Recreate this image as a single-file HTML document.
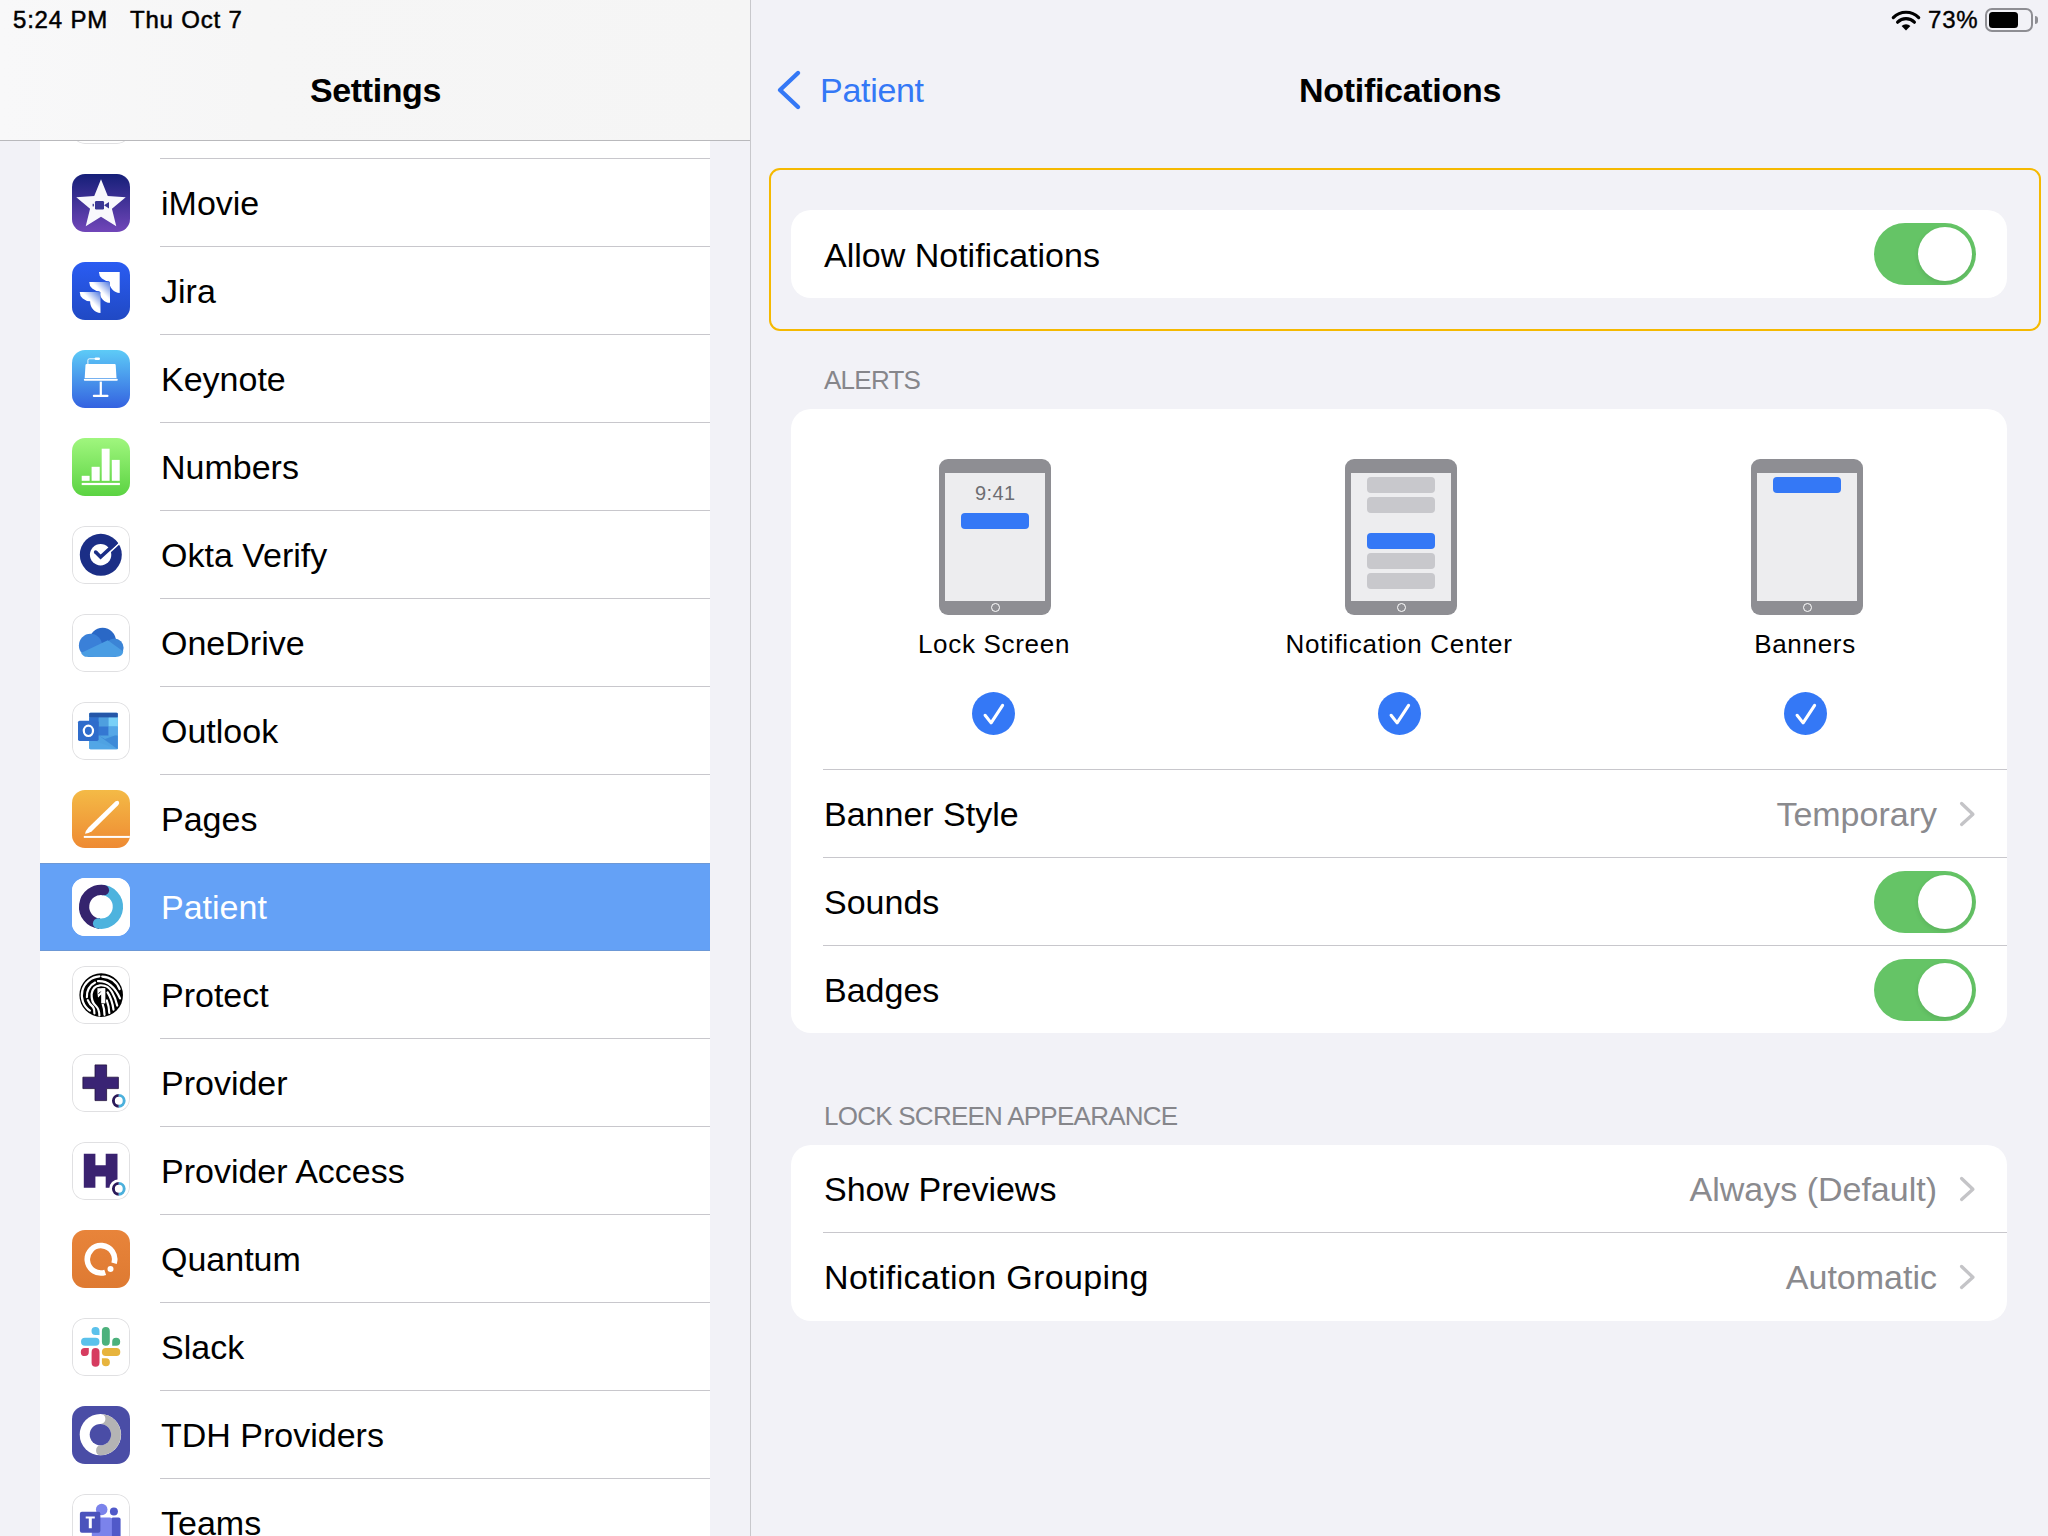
<!DOCTYPE html>
<html><head><meta charset="utf-8">
<style>
*{margin:0;padding:0;box-sizing:border-box}
html,body{width:2048px;height:1536px;overflow:hidden;background:#F2F2F7;font-family:"Liberation Sans",sans-serif;color:#000}
.a{position:absolute}
.t{position:absolute;white-space:nowrap;line-height:1}
.f34{font-size:34px}
.sep{position:absolute;height:1px;background:#C8C7CC}
.icon{position:absolute;left:72px;width:58px;height:58px;border-radius:13px;overflow:hidden}
.icon svg{display:block;width:58px;height:58px}
.wb:after{content:"";position:absolute;left:0;top:0;right:0;bottom:0;border-radius:13px;box-shadow:inset 0 0 0 1px #E0E0E2}
.wb{background:#fff}
.tog{position:absolute;width:102px;height:62px;border-radius:31px;background:#65C466}
.tog:after{content:"";position:absolute;left:44px;top:4px;width:54px;height:54px;border-radius:27px;background:#fff;box-shadow:0 2px 5px rgba(0,0,0,.10)}
.gray{color:#8A8A8E}
.hdr{font-size:26px;letter-spacing:-0.75px;color:#86868B}
.ipad{position:absolute;top:459px;width:112px;height:156px;border-radius:9px;background:#8E8E93}
.ipad .scr{position:absolute;left:6px;top:14px;width:100px;height:128px;background:#EDEDEF}
.ipad .hb{position:absolute;left:51.5px;top:143.5px;width:9px;height:9px;border-radius:50%;border:1.5px solid #fff}
.bar{position:absolute;width:68px;height:16px;border-radius:4px;background:#C8C8CC}
.bar.b{background:#3478F6}
.lbl{position:absolute;width:300px;text-align:center;font-size:26px;letter-spacing:0.7px;line-height:1;top:631px;white-space:nowrap}
.chk{position:absolute;top:691.5px;width:43px;height:43px}
.val{position:absolute;right:111px;font-size:34px;line-height:1;color:#8A8A8E;white-space:nowrap}
.chev{position:absolute;left:1958px;width:18px;height:26px}
</style></head><body>

<!-- LEFT SIDEBAR -->
<div class="a" style="left:0;top:0;width:750px;height:1536px;background:#F2F2F7"></div>
<div class="a" style="left:40px;top:60px;width:670px;height:1476px;background:#fff"></div>
<div class="icon wb" style="top:86px"></div>
<div class="icon" style="top:174px"><svg viewBox="0 0 58 58" width="58" height="58"><defs><linearGradient id="gim" x1="0" y1="0" x2="0" y2="1"><stop offset="0" stop-color="#151F78"/><stop offset="1" stop-color="#7146B9"/></linearGradient></defs><rect width="58" height="58" fill="url(#gim)"/><polygon points="29.00,5.20 35.76,21.90 53.73,23.17 39.94,34.75 44.28,52.23 29.00,42.70 13.72,52.23 18.06,34.75 4.27,23.17 22.24,21.90" fill="#F8F8FC"/><rect x="23" y="27" width="9" height="8.5" rx="1.2" fill="#3A3795"/><path d="M32 31.2 L37 28 V34.5 Z" fill="#3A3795"/><rect x="20.6" y="29.8" width="1.3" height="2.6" fill="#3A3795"/></svg></div>
<div class="t f34" style="left:161px;top:186px;color:#000">iMovie</div>
<div class="icon" style="top:262px"><svg viewBox="0 0 58 58" width="58" height="58"><defs><linearGradient id="gj" x1="0" y1="0" x2="0" y2="1"><stop offset="0" stop-color="#2A5CF2"/><stop offset="1" stop-color="#2049C4"/></linearGradient><linearGradient id="gjs" x1="0.2" y1="0.8" x2="1" y2="0"><stop offset="0.45" stop-color="#fff"/><stop offset="1" stop-color="#4F78E0"/></linearGradient><linearGradient id="gjs2" x1="0.2" y1="0.8" x2="1" y2="0"><stop offset="0.45" stop-color="#fff"/><stop offset="1" stop-color="#4F78E0"/></linearGradient></defs><rect width="58" height="58" fill="url(#gj)"/><path d="M26.9,10.1 H47.7 V30.9 A10.4 11.648000000000001 0 0 1 37.3 19.252000000000002 A10.4 9.152000000000001 0 0 1 26.9 10.1 Z" fill="#fff"/><path d="M17.2,20.0 H38.0 V40.8 A10.4 11.648000000000001 0 0 1 27.6 29.152 A10.4 9.152000000000001 0 0 1 17.2 20.0 Z" fill="url(#gjs)"/><path d="M7.7,30.1 H28.5 V50.900000000000006 A10.4 11.648000000000001 0 0 1 18.1 39.252 A10.4 9.152000000000001 0 0 1 7.7 30.1 Z" fill="url(#gjs2)"/></svg></div>
<div class="t f34" style="left:161px;top:274px;color:#000">Jira</div>
<div class="icon" style="top:350px"><svg viewBox="0 0 58 58" width="58" height="58"><defs><linearGradient id="gk" x1="0" y1="0" x2="0" y2="1"><stop offset="0" stop-color="#5DCBF7"/><stop offset="1" stop-color="#3462E0"/></linearGradient></defs><rect width="58" height="58" fill="url(#gk)"/><path d="M14.6 14 H42.6 Q43.6 14 43.7 15 L44.5 27.9 H12.7 L13.5 15 Q13.6 14 14.6 14 Z" fill="#fff"/><rect x="11.8" y="28.8" width="34" height="2" rx="1" fill="#fff"/><rect x="27.7" y="31.6" width="2.2" height="13.5" fill="#fff"/><rect x="20.8" y="44.8" width="15.7" height="2.2" rx="1" fill="#fff"/><path d="M15.9 14 V10.2 Q15.9 8.8 17.3 8.8 H23" fill="none" stroke="#fff" stroke-width="0.9"/><rect x="22.6" y="7.4" width="5.4" height="2.6" rx="1.3" fill="#fff"/></svg></div>
<div class="t f34" style="left:161px;top:362px;color:#000">Keynote</div>
<div class="icon" style="top:438px"><svg viewBox="0 0 58 58" width="58" height="58"><defs><linearGradient id="gn" x1="0" y1="0" x2="0" y2="1"><stop offset="0" stop-color="#A0F67E"/><stop offset="1" stop-color="#5BD342"/></linearGradient></defs><rect width="58" height="58" fill="url(#gn)"/><rect x="9.7" y="37.8" width="7.9" height="5" fill="#fff"/><rect x="19.6" y="28.8" width="8.1" height="14" fill="#fff"/><rect x="29.7" y="10.7" width="7.9" height="32.1" fill="#fff"/><rect x="39.8" y="21.9" width="7.9" height="20.9" fill="#fff"/><rect x="9.7" y="44.9" width="38.2" height="2.2" fill="#fff"/></svg></div>
<div class="t f34" style="left:161px;top:450px;color:#000">Numbers</div>
<div class="icon wb" style="top:526px"><svg viewBox="0 0 58 58" width="58" height="58"><rect width="58" height="58" fill="#fff"/><circle cx="28.8" cy="28.8" r="21" fill="#1B2E86"/><circle cx="28.6" cy="28.8" r="10.7" fill="#fff"/><path d="M37.2 26.6 L51 13.8" stroke="#fff" stroke-width="1.8" fill="none"/><path d="M23.6 26 L28.6 31 L44.8 16.2" stroke="#1B2E86" stroke-width="3.6" fill="none" stroke-linecap="butt" stroke-linejoin="miter"/><circle cx="23.6" cy="26" r="1.8" fill="#1B2E86"/></svg></div>
<div class="t f34" style="left:161px;top:538px;color:#000">Okta Verify</div>
<div class="icon wb" style="top:614px"><svg viewBox="0 0 58 58" width="58" height="58"><rect width="58" height="58" fill="#fff"/><circle cx="30.6" cy="27.2" r="13.4" fill="#2A68C6"/><circle cx="18.5" cy="31.4" r="11.6" fill="#3A80D8"/><circle cx="42.4" cy="33.8" r="9.2" fill="#3B84D6"/><rect x="16" y="33" width="28" height="9.8" fill="#3A80D8"/><path d="M13 42.8 Q8.5 40 9.5 38.8 L35.8 26.3 L51.3 37.4 Q50.5 42.8 44 42.8 Z" fill="#4A9DE3"/></svg></div>
<div class="t f34" style="left:161px;top:626px;color:#000">OneDrive</div>
<div class="icon wb" style="top:702px"><svg viewBox="0 0 58 58" width="58" height="58"><rect width="58" height="58" fill="#fff"/><rect x="17.2" y="10.7" width="28.6" height="36.6" rx="1.5" fill="#4FA2E2"/><rect x="17.2" y="10.7" width="28.6" height="5" rx="1" fill="#2456A8"/><rect x="26.6" y="15.5" width="10" height="9" fill="#4E9FDF"/><rect x="36.6" y="15.5" width="9.2" height="9" fill="#79D0F7"/><rect x="17.2" y="15.5" width="9.4" height="18" fill="#2F6FCE"/><rect x="26.6" y="24.5" width="10" height="9" fill="#3477D2"/><rect x="36.6" y="24.5" width="9.2" height="9" fill="#55A7E7"/><path d="M26.6 33.5 L33 37 L43 33.5 L45.8 33.5 V47.3 Z" fill="#3D8AD8"/><path d="M17.2 37 L45.8 47.3 H18.7 Q17.2 47.3 17.2 45.8 Z" fill="#52A6E6"/><rect x="6" y="18.7" width="20.6" height="20.2" rx="1.6" fill="#2F6CCB"/><ellipse cx="16.4" cy="28.8" rx="4.6" ry="5.2" fill="none" stroke="#fff" stroke-width="2.2"/></svg></div>
<div class="t f34" style="left:161px;top:714px;color:#000">Outlook</div>
<div class="icon" style="top:790px"><svg viewBox="0 0 58 58" width="58" height="58"><defs><linearGradient id="gp" x1="0" y1="0" x2="0" y2="1"><stop offset="0" stop-color="#F4BA46"/><stop offset="1" stop-color="#EE8A33"/></linearGradient></defs><rect width="58" height="58" fill="url(#gp)"/><path d="M43.6 11.2 Q46.8 9.6 47.2 13 Q47 14.2 45.8 15.4 L19.8 41.2 Q16.5 43.3 13 43.8 Q13.8 40.2 16.5 37.4 Z" fill="#fff"/><rect x="11.8" y="45.9" width="47" height="2" fill="#fff"/></svg></div>
<div class="t f34" style="left:161px;top:802px;color:#000">Pages</div>
<div class="a" style="left:40px;top:863px;width:670px;height:88px;background:#64A1F6;box-shadow:inset 0 1px 0 #6C98D6,inset 0 -1px 0 #6C98D6"></div>
<div class="icon" style="top:878px;background:#fff"><svg viewBox="0 0 58 58" width="58" height="58"><rect width="58" height="58" fill="#fff"/><path d="M29 11.9 A16.9 16.9 0 1 1 26.07 45.44" stroke="#4DB3DE" stroke-width="10.3" fill="none"/><path d="M27.53 45.64 A16.9 16.9 0 1 1 31.93 12.16" stroke="#35246E" stroke-width="10.3" fill="none"/><circle cx="31.93" cy="12.16" r="5.15" fill="#35246E"/><circle cx="26.07" cy="45.44" r="5.15" fill="#4DB3DE"/></svg></div>
<div class="t f34" style="left:161px;top:890px;color:#fff">Patient</div>
<div class="icon wb" style="top:966px"><svg viewBox="0 0 58 58" width="58" height="58"><rect width="58" height="58" fill="#fff"/><circle cx="29.2" cy="29.1" r="21.8" fill="#000"/><g fill="none" stroke="#fff" stroke-width="2.2" stroke-linecap="round"><path d="M27.4 10.4 A18.8 18.8 0 0 0 17.9 44.6"/><path d="M30.2 10.6 A18.8 18.8 0 0 1 47.6 23.2"/><path d="M23.1 16.6 A14.6 14.6 0 0 0 14.9 31.2"/><path d="M26 15.2 Q40 14.5 48 32.4"/><path d="M15.8 34.2 Q17.5 38.5 21 41 Q22.6 43 22.4 47.4"/><path d="M27.4 49.4 Q27.2 43 24 40 Q19.2 36 19.6 28 Q20.8 20 28 19.3 Q36 18.8 40 26 Q43.5 32 45.2 39.6"/><path d="M32.5 48.8 Q32.4 42.5 30.8 38.6"/><path d="M37.3 47 Q37 40 34.8 34.4"/><path d="M41.5 43.6 Q40.2 34 35.6 26.4"/></g><path d="M24.6 21.4 H34 V38 H28.6 V30.2 L26.2 33 Q24.4 27 24.6 21.4 Z" fill="#000"/><path d="M25.4 22.2 H33.2 V37.2 H29.4 V28 L26 31.6 Q25.2 27 25.4 22.2 Z" fill="#fff"/><path d="M29.4 22.2 H33.2 V37.2 H29.4 Z M26 28.2 L29.4 24.6 V28 L26 31.6 Z" fill="#fff"/><path d="M28.6 25.6 L26.6 27.8" stroke="#000" stroke-width="1"/></svg></div>
<div class="t f34" style="left:161px;top:978px;color:#000">Protect</div>
<div class="icon wb" style="top:1054px"><svg viewBox="0 0 58 58" width="58" height="58"><rect width="58" height="58" fill="#fff"/><path d="M23 10.9 H34.6 V23.2 H46.4 V34.6 H34.6 V46.6 H23 V34.6 H10.9 V23.2 H23 Z" fill="#3A2474" stroke="#22123F" stroke-width="0.8"/><circle cx="46.8" cy="46.8" r="8.2" fill="#fff"/><path d="M46.8 41.4 A5.4 5.4 0 0 0 46.8 52.199999999999996" stroke="#2B1A5A" stroke-width="2.9" fill="none"/><path d="M46.8 41.4 A5.4 5.4 0 0 1 46.8 52.199999999999996" stroke="#4BB0DC" stroke-width="2.9" fill="none"/></svg></div>
<div class="t f34" style="left:161px;top:1066px;color:#000">Provider</div>
<div class="icon wb" style="top:1142px"><svg viewBox="0 0 58 58" width="58" height="58"><rect width="58" height="58" fill="#fff"/><path d="M11.8 11.8 H23.4 V23.2 H33.7 V11.8 H45.5 V45.8 H33.7 V34.6 H23.4 V45.8 H11.8 Z" fill="#3A2270"/><circle cx="46.8" cy="46.8" r="9.6" fill="#fff"/><path d="M46.8 41.4 A5.4 5.4 0 0 0 46.8 52.199999999999996" stroke="#2B1A5A" stroke-width="2.9" fill="none"/><path d="M46.8 41.4 A5.4 5.4 0 0 1 46.8 52.199999999999996" stroke="#4BB0DC" stroke-width="2.9" fill="none"/></svg></div>
<div class="t f34" style="left:161px;top:1154px;color:#000">Provider Access</div>
<div class="icon" style="top:1230px"><svg viewBox="0 0 58 58" width="58" height="58"><defs><linearGradient id="gq" x1="0" y1="0" x2="0" y2="1"><stop offset="0" stop-color="#E8843A"/><stop offset="1" stop-color="#DE7A32"/></linearGradient></defs><rect width="58" height="58" fill="url(#gq)"/><path d="M33.2 42.3 A13.7 13.7 0 1 1 42.1 33.2" stroke="#fff" stroke-width="5.6" fill="none"/><circle cx="38.5" cy="38.9" r="3" fill="#fff"/></svg></div>
<div class="t f34" style="left:161px;top:1242px;color:#000">Quantum</div>
<div class="icon wb" style="top:1318px"><svg viewBox="0 0 58 58" width="58" height="58"><rect width="58" height="58" fill="#fff"/><rect x="9" y="19.8" width="18.5" height="7.9" rx="3.95" fill="#5BC1EB"/><path d="M27.5 17 H23.6 A4 4 0 1 1 27.5 13 Z" fill="#5BC1EB"/><rect x="29.9" y="9" width="7.9" height="18.7" rx="3.95" fill="#4CB17C"/><path d="M40.2 27.7 V23.8 A4 4 0 1 1 44.2 27.7 Z" fill="#4CB17C"/><path d="M16.8 30.1 V34 A4 4 0 1 1 12.8 30.1 Z" fill="#D63C60"/><rect x="19.6" y="30.1" width="7.9" height="18.7" rx="3.95" fill="#D63C60"/><rect x="29.9" y="30.1" width="18.4" height="7.8" rx="3.9" fill="#E7B43D"/><path d="M29.9 40.2 H33.8 A4 4 0 1 1 29.9 44.2 Z" fill="#E7B43D"/></svg></div>
<div class="t f34" style="left:161px;top:1330px;color:#000">Slack</div>
<div class="icon" style="top:1406px"><svg viewBox="0 0 58 58" width="58" height="58"><rect width="58" height="58" fill="#4A4DA6"/><circle cx="28.4" cy="28.6" r="20.7" fill="#fff"/><path d="M28.4 7.9 A20.7 20.7 0 0 1 28 49.3 A5.1 5.1 0 0 1 28.4 39.3 A10.7 10.7 0 0 0 28.4 17.9 A5 5 0 0 0 28.4 7.9 Z" fill="#B4B4B4"/><circle cx="28.4" cy="28.6" r="10.7" fill="#4A4DA6"/></svg></div>
<div class="t f34" style="left:161px;top:1418px;color:#000">TDH Providers</div>
<div class="icon wb" style="top:1494px"><svg viewBox="0 0 58 58" width="58" height="58"><rect width="58" height="58" fill="#fff"/><circle cx="29.7" cy="15.5" r="5.8" fill="#7B83EB"/><circle cx="41.9" cy="17.4" r="4" fill="#5059C9"/><rect x="39" y="23.6" width="9.6" height="30" rx="2" fill="#5059C9"/><rect x="19.8" y="23.6" width="20.1" height="34" rx="2" fill="#7B83EB"/><rect x="7.9" y="17.8" width="20.5" height="20.9" rx="2" fill="#4B53BC"/><path d="M13.7 22.6 H22.8 V24.5 H19.8 V34.2 H16.8 V24.5 H13.7 Z" fill="#fff"/></svg></div>
<div class="t f34" style="left:161px;top:1506px;color:#000">Teams</div>
<div class="sep" style="left:160px;top:158px;width:550px"></div>
<div class="sep" style="left:160px;top:246px;width:550px"></div>
<div class="sep" style="left:160px;top:334px;width:550px"></div>
<div class="sep" style="left:160px;top:422px;width:550px"></div>
<div class="sep" style="left:160px;top:510px;width:550px"></div>
<div class="sep" style="left:160px;top:598px;width:550px"></div>
<div class="sep" style="left:160px;top:686px;width:550px"></div>
<div class="sep" style="left:160px;top:774px;width:550px"></div>
<div class="sep" style="left:160px;top:1038px;width:550px"></div>
<div class="sep" style="left:160px;top:1126px;width:550px"></div>
<div class="sep" style="left:160px;top:1214px;width:550px"></div>
<div class="sep" style="left:160px;top:1302px;width:550px"></div>
<div class="sep" style="left:160px;top:1390px;width:550px"></div>
<div class="sep" style="left:160px;top:1478px;width:550px"></div>

<!-- nav bar -->
<div class="a" style="left:0;top:0;width:750px;height:140px;background:linear-gradient(90deg,#F8F8F9 0,#F6F6F6 260px,#F5F5F5 750px)"></div>
<div class="a" style="left:0;top:140px;width:750px;height:1px;background:#B9B9BC"></div>
<div class="t" style="left:13px;top:8px;font-size:24px;letter-spacing:0.8px;-webkit-text-stroke:0.5px #000">5:24 PM</div>
<div class="t" style="left:130px;top:8px;font-size:24px;letter-spacing:0.8px;-webkit-text-stroke:0.5px #000">Thu Oct 7</div>
<div class="t f34" style="left:310px;top:73px;font-weight:700;letter-spacing:-0.4px">Settings</div>

<!-- divider -->
<div class="a" style="left:750px;top:0;width:1px;height:1536px;background:#C8C8CC"></div>

<!-- RIGHT status -->
<svg class="a" style="left:1890px;top:8px" width="32" height="24" viewBox="0 0 32 24">
  <path d="M16 22.5 L11.6 18.1 A6.2 6.2 0 0 1 20.4 18.1 Z" fill="#000"/>
  <path d="M7.6 14.2 A11.8 11.8 0 0 1 24.4 14.2" fill="none" stroke="#000" stroke-width="3.2" stroke-linecap="round"/>
  <path d="M3.3 9.6 A17.8 17.8 0 0 1 28.7 9.6" fill="none" stroke="#000" stroke-width="3.2" stroke-linecap="round"/>
</svg>
<div class="t" style="left:1928px;top:8px;font-size:24px;letter-spacing:0.8px;-webkit-text-stroke:0.4px #000">73%</div>
<div class="a" style="left:1985px;top:8px;width:48px;height:24px;border:2px solid #8E8E93;border-radius:7px"></div>
<div class="a" style="left:1989px;top:12px;width:29px;height:16px;background:#000;border-radius:3.5px"></div>
<div class="a" style="left:2035px;top:16px;width:3px;height:8px;background:#8E8E93;border-radius:0 3px 3px 0"></div>

<!-- nav right -->
<svg class="a" style="left:776px;top:69px" width="28" height="42" viewBox="0 0 28 42"><path d="M22 4 L4 21 L22 38" fill="none" stroke="#3478F6" stroke-width="4.4" stroke-linecap="round" stroke-linejoin="round"/></svg>
<div class="t f34" style="left:820px;top:73px;color:#3478F6;letter-spacing:-0.3px">Patient</div>
<div class="t f34" style="left:1299px;top:73px;font-weight:700;letter-spacing:-0.3px">Notifications</div>

<!-- yellow highlight -->
<div class="a" style="left:769px;top:168px;width:1272px;height:163px;border:2px solid #F5B900;border-radius:11px"></div>
<div class="a" style="left:791px;top:210px;width:1216px;height:88px;background:#fff;border-radius:20px"></div>
<div class="t f34" style="left:824px;top:238px">Allow Notifications</div>
<div class="tog" style="left:1874px;top:223px"></div>

<!-- ALERTS -->
<div class="t hdr" style="left:824px;top:367px">ALERTS</div>
<div class="a" style="left:791px;top:409px;width:1216px;height:624px;background:#fff;border-radius:20px"></div>

<div class="ipad" style="left:939px"><div class="scr"></div><div class="hb"></div></div>
<div class="t" style="left:975px;top:483px;font-size:20px;letter-spacing:0.4px;color:#6D6D72">9:41</div>
<div class="bar b" style="left:961px;top:513px"></div>

<div class="ipad" style="left:1345px"><div class="scr"></div><div class="hb"></div></div>
<div class="bar" style="left:1367px;top:477px"></div>
<div class="bar" style="left:1367px;top:497px"></div>
<div class="bar b" style="left:1367px;top:533px"></div>
<div class="bar" style="left:1367px;top:553px"></div>
<div class="bar" style="left:1367px;top:573px"></div>

<div class="ipad" style="left:1751px"><div class="scr"></div><div class="hb"></div></div>
<div class="bar b" style="left:1773px;top:477px"></div>

<div class="lbl" style="left:844px">Lock Screen</div>
<div class="lbl" style="left:1249px">Notification Center</div>
<div class="lbl" style="left:1655px">Banners</div>

<svg class="chk" style="left:972px" viewBox="0 0 43 43"><circle cx="21.5" cy="21.5" r="21.5" fill="#3478F6"/><path d="M13.1 23.3 L19.1 30.9 L30.6 13.4" fill="none" stroke="#fff" stroke-width="3.1" stroke-linecap="round" stroke-linejoin="round"/></svg>
<svg class="chk" style="left:1377.5px" viewBox="0 0 43 43"><circle cx="21.5" cy="21.5" r="21.5" fill="#3478F6"/><path d="M13.1 23.3 L19.1 30.9 L30.6 13.4" fill="none" stroke="#fff" stroke-width="3.1" stroke-linecap="round" stroke-linejoin="round"/></svg>
<svg class="chk" style="left:1783.5px" viewBox="0 0 43 43"><circle cx="21.5" cy="21.5" r="21.5" fill="#3478F6"/><path d="M13.1 23.3 L19.1 30.9 L30.6 13.4" fill="none" stroke="#fff" stroke-width="3.1" stroke-linecap="round" stroke-linejoin="round"/></svg>

<div class="sep" style="left:823px;top:769px;width:1184px"></div>
<div class="t f34" style="left:824px;top:797px">Banner Style</div>
<div class="val" style="top:797px">Temporary</div>
<svg class="chev" style="top:801px" viewBox="0 0 18 26"><path d="M3.6 2.5 L14.9 13.3 L3.6 23.5" fill="none" stroke="#C4C4C7" stroke-width="3.3" stroke-linecap="round" stroke-linejoin="round"/></svg>
<div class="sep" style="left:823px;top:857px;width:1184px"></div>
<div class="t f34" style="left:824px;top:885px">Sounds</div>
<div class="tog" style="left:1874px;top:871px"></div>
<div class="sep" style="left:823px;top:945px;width:1184px"></div>
<div class="t f34" style="left:824px;top:973px">Badges</div>
<div class="tog" style="left:1874px;top:959px"></div>

<!-- LOCK SCREEN APPEARANCE -->
<div class="t hdr" style="left:824px;top:1103px">LOCK SCREEN APPEARANCE</div>
<div class="a" style="left:791px;top:1145px;width:1216px;height:176px;background:#fff;border-radius:20px"></div>
<div class="t f34" style="left:824px;top:1172px">Show Previews</div>
<div class="val" style="top:1172px">Always (Default)</div>
<svg class="chev" style="top:1176px" viewBox="0 0 18 26"><path d="M3.6 2.5 L14.9 13.3 L3.6 23.5" fill="none" stroke="#C4C4C7" stroke-width="3.3" stroke-linecap="round" stroke-linejoin="round"/></svg>
<div class="sep" style="left:823px;top:1232px;width:1184px"></div>
<div class="t f34" style="left:824px;top:1260px;letter-spacing:0.35px">Notification Grouping</div>
<div class="val" style="top:1260px">Automatic</div>
<svg class="chev" style="top:1264px" viewBox="0 0 18 26"><path d="M3.6 2.5 L14.9 13.3 L3.6 23.5" fill="none" stroke="#C4C4C7" stroke-width="3.3" stroke-linecap="round" stroke-linejoin="round"/></svg>

</body></html>
